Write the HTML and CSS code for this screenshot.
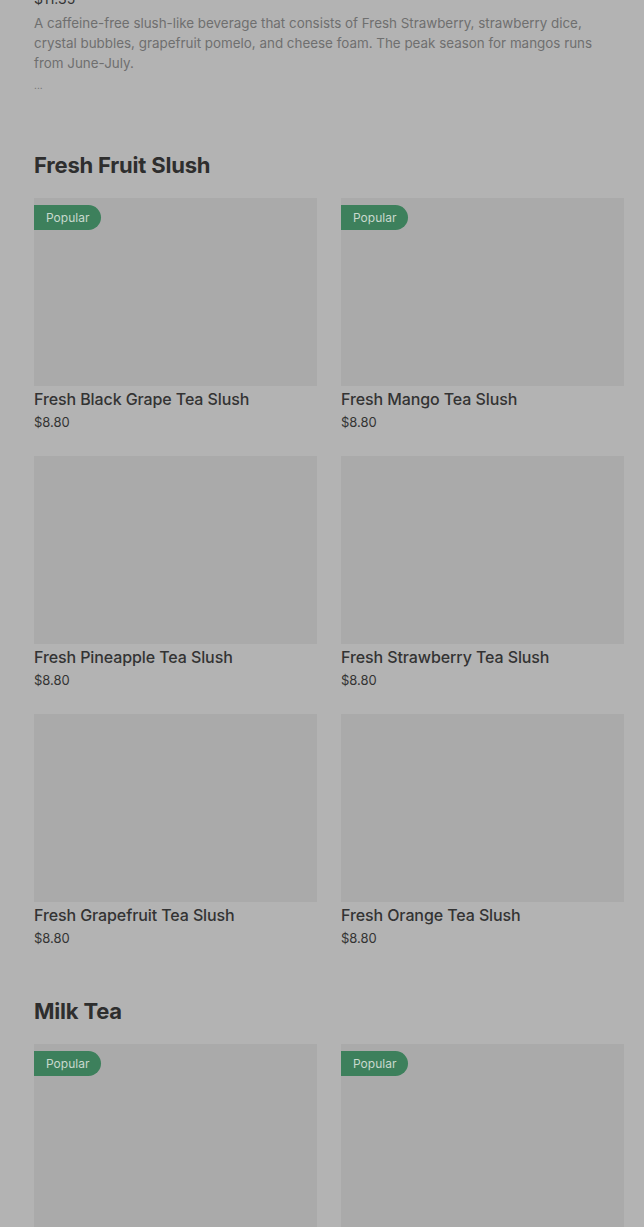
FILE: index.html
```html
<!DOCTYPE html>
<html>
<head>
<meta charset="utf-8">
<link rel="stylesheet" href="styles.css">
</head>
<body>
<div class="page">
  <div class="intro">
    <div class="top-price">$11.35</div>
    <p class="desc">A caffeine-free slush-like beverage that consists of Fresh Strawberry, strawberry dice, crystal bubbles, grapefruit pomelo, and cheese foam. The peak season for mangos runs from June-July.</p>
    <div class="more">...</div>
  </div>

  <section class="section">
    <h2 class="section-title">Fresh Fruit Slush</h2>
    <div class="grid">
      <div class="card"><div class="thumb"><span class="badge">Popular</span></div><div class="name">Fresh Black Grape Tea Slush</div><div class="price">$8.80</div></div>
      <div class="card"><div class="thumb"><span class="badge">Popular</span></div><div class="name">Fresh Mango Tea Slush</div><div class="price">$8.80</div></div>
      <div class="card"><div class="thumb"></div><div class="name">Fresh Pineapple Tea Slush</div><div class="price">$8.80</div></div>
      <div class="card"><div class="thumb"></div><div class="name">Fresh Strawberry Tea Slush</div><div class="price">$8.80</div></div>
      <div class="card"><div class="thumb"></div><div class="name">Fresh Grapefruit Tea Slush</div><div class="price">$8.80</div></div>
      <div class="card"><div class="thumb"></div><div class="name">Fresh Orange Tea Slush</div><div class="price">$8.80</div></div>
    </div>
  </section>

  <section class="section">
    <h2 class="section-title">Milk Tea</h2>
    <div class="grid">
      <div class="card"><div class="thumb"><span class="badge">Popular</span></div></div>
      <div class="card"><div class="thumb"><span class="badge">Popular</span></div></div>
    </div>
  </section>
</div>
</body>
</html>
```

FILE: styles.css
```css
html, body {
  margin: 0;
  padding: 0;
  background: #b3b3b3;
}
body {
  font-family: Inter, "Liberation Sans", sans-serif;
  color: #333;
  height: 1227px;
  overflow: hidden;
}
.page {
  padding: 0 20px 0 34px;
  margin-top: -11px;
}
.intro {
  padding-bottom: 55px;
}
.top-price {
  font-size: 14px;
  line-height: 20px;
  color: #333;
}
.desc {
  margin: 4px 0 0;
  font-size: 13.4px;
  line-height: 20px;
  color: #6f6f6f;
  font-weight: 400;
}
.more {
  font-size: 10px;
  line-height: 18px;
  color: #6f6f6f;
  margin-top: 3px;
}
.section {
  margin-bottom: 46px;
}
.section-title {
  margin: 0 0 17px;
  font-weight: 700;
  font-size: 22px;
  line-height: 32px;
  letter-spacing: -0.2px;
  color: #2e2e2e;
}
.grid {
  display: grid;
  grid-template-columns: 283px 283px;
  column-gap: 24px;
  row-gap: 23px;
}
.card {
  display: flex;
  flex-direction: column;
}
.thumb {
  position: relative;
  height: 188px;
  background: #aaaaaa;
}
.badge {
  position: absolute;
  left: 0;
  top: 7px;
  height: 25px;
  line-height: 25px;
  padding: 0 12px;
  background: #3d805c;
  color: #c9d9ce;
  font-size: 12px;
  border-radius: 0 13px 13px 0;
}
.name {
  margin-top: 2px;
  font-size: 16px;
  line-height: 22px;
  font-weight: 500;
  letter-spacing: -0.1px;
  color: #333;
}
.price {
  margin-top: 1px;
  font-size: 13px;
  line-height: 22px;
  color: #333;
}
```
